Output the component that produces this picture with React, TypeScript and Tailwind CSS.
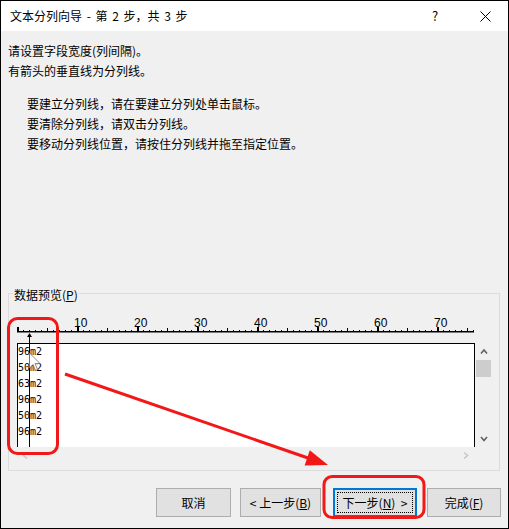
import React from 'react';

const lines = ['96m2', '50m2', '63m2', '96m2', '50m2', '96m2'];

const Ruler: React.FC = () => {
  const ticks = [];
  for (let i = 0; i <= 76; i++) {
    if (i % 10 === 0) {
      ticks.push(<rect key={i} x={6 * i} y={22} width={2} height={5} fill="#000" />);
    } else if (i % 5 === 0) {
      ticks.push(<rect key={i} x={6 * i} y={23} width={1} height={4} fill="#000" />);
    } else {
      ticks.push(<rect key={i} x={6 * i} y={25} width={1} height={2} fill="#000" />);
    }
  }
  const labels = [10, 20, 30, 40, 50, 60, 70];
  return (
    <svg width="460" height="38" className="block ml-[8px]">
      <rect x={0} y={26} width={457} height={1.5} fill="#000" />
      {ticks}
      {labels.map((n) => (
        <text key={n} x={n * 6 - 3} y={21.5} fontSize="12" fontFamily="'Liberation Sans', Arial, sans-serif" fill="#000">
          {n}
        </text>
      ))}
    </svg>
  );
};

const Chevron: React.FC<{ dir: 'up' | 'down' | 'left' | 'right'; color: string }> = ({ dir, color }) => {
  const d = {
    up: 'M1 5 L4 1.5 L7 5',
    down: 'M1 1.5 L4 5 L7 1.5',
    left: 'M5 1 L1.5 4 L5 7',
    right: 'M2 1 L5.5 4 L2 7',
  }[dir];
  return (
    <svg width="8" height="8" viewBox="0 0 8 7">
      <path d={d} fill="none" stroke={color} strokeWidth="1.6" />
    </svg>
  );
};

export default function App() {
  return (
    <div
      className="relative w-[509px] h-[529px] border border-black bg-[#f0f0f0] flex flex-col text-[12px] text-black"
      style={{ fontFamily: "'Noto Sans CJK SC', 'Noto Sans', sans-serif" }}
    >
      {/* Title bar */}
      <div className="h-[30px] bg-white flex items-center shrink-0">
        <span className="pl-[9px] [word-spacing:2px]">文本分列向导 - 第 2 步，共 3 步</span>
        <div className="ml-auto flex gap-[4px]">
          <div className="w-[46px] h-[30px] flex items-center justify-center text-[13px]">?</div>
          <div className="w-[46px] h-[30px] flex items-center justify-center">
            <svg width="11" height="11" viewBox="0 0 11 11">
              <path d="M0.5 0.5 L10.5 10.5 M10.5 0.5 L0.5 10.5" stroke="#000" strokeWidth="1" />
            </svg>
          </div>
        </div>
      </div>

      {/* Instructions */}
      <div className="pt-[10px] pl-[7px] leading-[20px]">
        <p>请设置字段宽度(列间隔)。</p>
        <p>有箭头的垂直线为分列线。</p>
        <div className="mt-[13px] ml-[19px]">
          <p>要建立分列线，请在要建立分列处单击鼠标。</p>
          <p>要清除分列线，请双击分列线。</p>
          <p>要移动分列线位置，请按住分列线并拖至指定位置。</p>
        </div>
      </div>

      {/* Data preview group */}
      <div className="mt-[139px] ml-[7px] w-[492px] border border-[#dcdcdc] pb-[7px]">
        <div className="-mt-[9px] ml-[4px] px-[1px] w-fit bg-[#f0f0f0] leading-[20px]">
          数据预览(<span className="underline">P</span>)
        </div>
        <div className="relative">
          <Ruler />
          <div className="flex ml-[8px]">
            <div
              className="w-[458px] h-[104px] bg-white border-l border-t border-r border-black leading-[16px] text-[10px]"
              style={{ fontFamily: "'DejaVu Sans Mono', 'Liberation Mono', monospace" }}
            >
              {lines.map((l, i) => (
                <div key={i}>{l}</div>
              ))}
            </div>
            <div className="w-[17px] h-[104px] flex flex-col items-center">
              <div className="h-[17px] flex items-center justify-center">
                <Chevron dir="up" color="#606060" />
              </div>
              <div className="h-[17px] w-[15px] bg-[#cdcdcd]" />
              <div className="flex-1" />
              <div className="h-[17px] flex items-center justify-center">
                <Chevron dir="down" color="#606060" />
              </div>
            </div>
          </div>
          <div className="ml-[8px] w-[458px] h-[16px] flex items-center justify-between px-[5px]">
            <Chevron dir="left" color="#c8c8c8" />
            <Chevron dir="right" color="#c8c8c8" />
          </div>
          {/* column break line and mouse pointer */}
          <svg className="absolute left-0 top-0 pointer-events-none" width="40" height="142">
            <path d="M20.5 28 L23 32 L18 32 Z" fill="#000" />
            <rect x={20} y={30} width={1} height={112} fill="#000" />
            <path
              d="M20.5 48 L20.5 63 L24 59.5 L26.5 65.5 L28.5 64.5 L26 58.5 L31 58.5 Z"
              fill="#fff"
              stroke="#707070"
              strokeWidth="0.8"
            />
          </svg>
        </div>
      </div>

      {/* Buttons */}
      <div className="mt-[17px] flex">
        <button className="ml-[155px] w-[75px] h-[29px] bg-[#e1e1e1] border border-[#adadad]">取消</button>
        <button className="ml-[9px] w-[81px] h-[29px] bg-[#e1e1e1] border border-[#adadad]">
          &lt; 上一步(<span className="underline">B</span>)
        </button>
        <button className="ml-[12px] w-[84px] h-[29px] bg-[#e1e1e1] border-2 border-[#0078d7] p-[2px]">
          <div className="w-full h-full border border-dotted border-black flex items-center justify-center">
            下一步(<span className="underline">N</span>)&nbsp;&nbsp;&gt;
          </div>
        </button>
        <button className="ml-[10px] w-[74px] h-[29px] bg-[#e1e1e1] border border-[#adadad]">
          完成(<span className="underline">F</span>)
        </button>
      </div>

      {/* Red annotations */}
      <svg className="absolute -left-[1px] -top-[1px] pointer-events-none" width="509" height="529">
        <rect x="8.5" y="318.5" width="49" height="135" rx="9" fill="none" stroke="#f21818" strokeWidth="3" />
        <rect x="324" y="476.5" width="100" height="41" rx="8" fill="none" stroke="#f21818" strokeWidth="3" />
        <line x1="65" y1="374" x2="308" y2="458" stroke="#f21818" strokeWidth="3" />
        <path d="M328 465 L304.6 465.4 L309.8 450.2 Z" fill="#f21818" />
      </svg>
    </div>
  );
}
